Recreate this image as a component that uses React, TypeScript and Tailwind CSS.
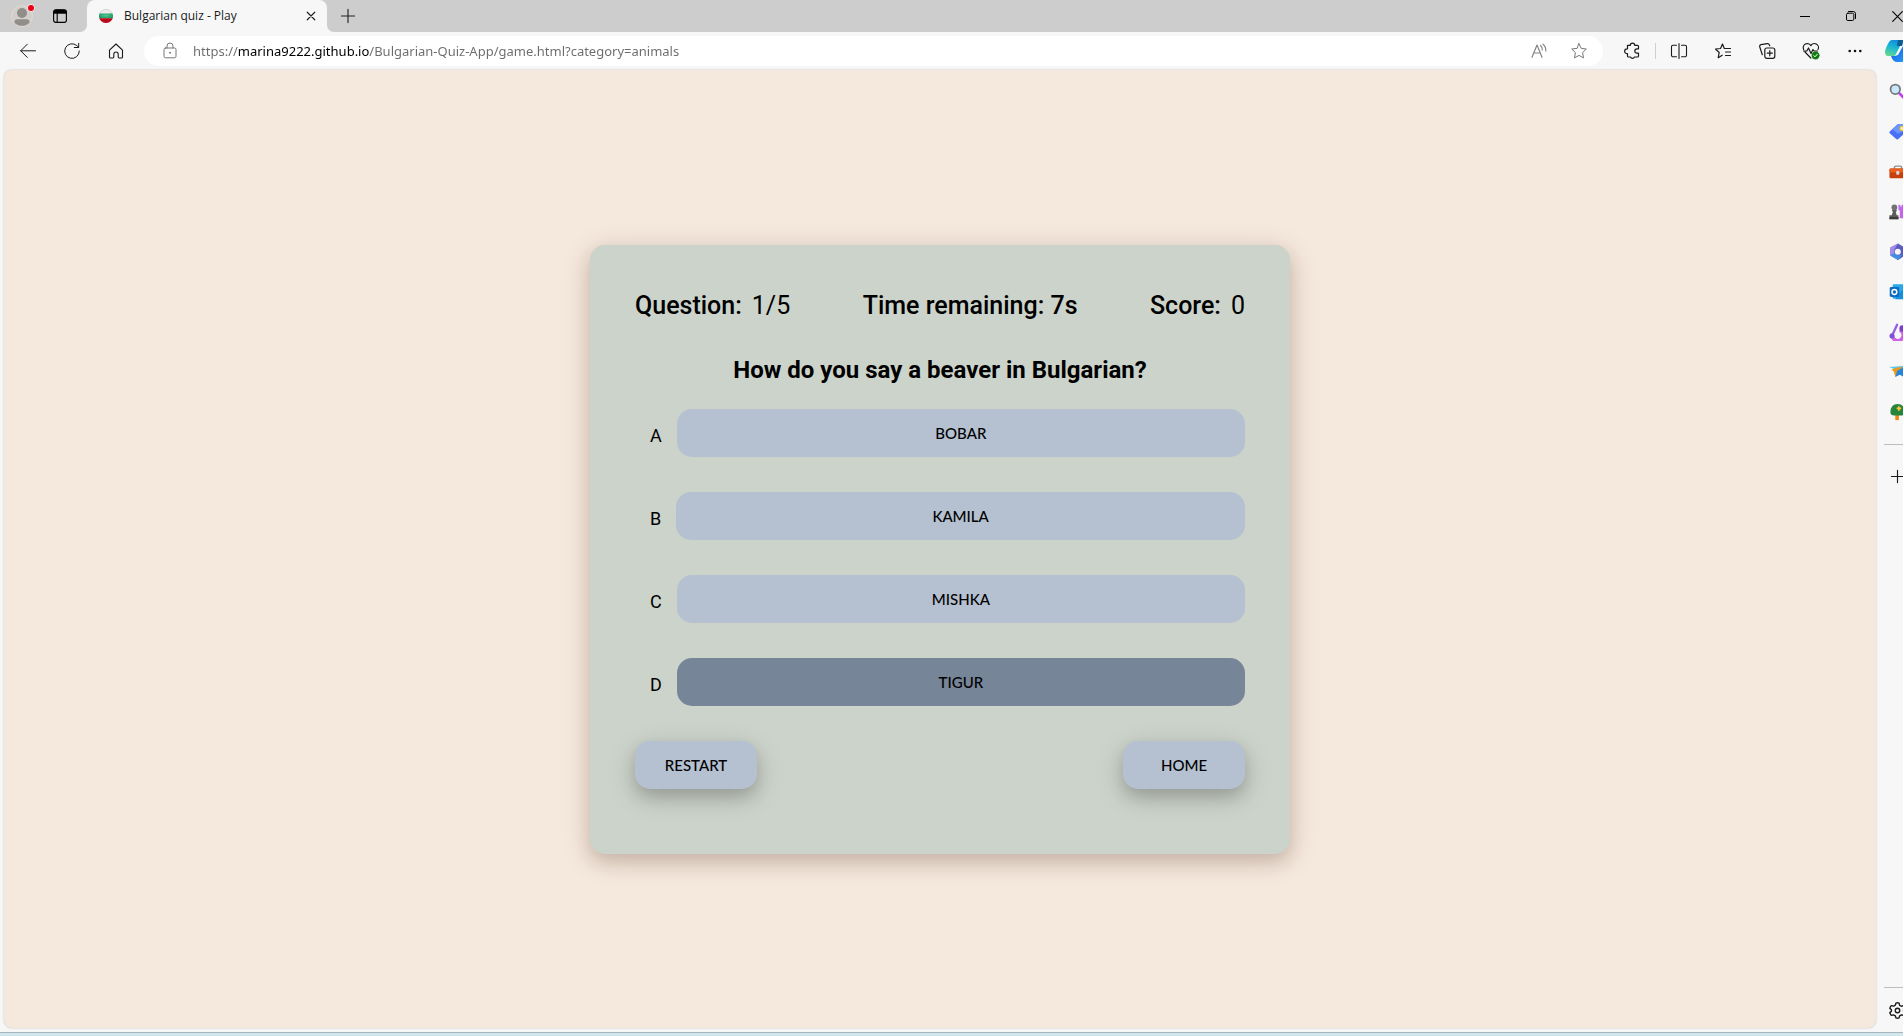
import { useState } from 'react';
import type { ReactNode } from 'react';

type IconProps = { children: ReactNode; size?: string; stroke?: string };

function Icon({ children, size = 'size-4', stroke = 'stroke-[#1b1b1b]' }: IconProps) {
  return (
    <svg
      viewBox="0 0 16 16"
      className={`${size} ${stroke} shrink-0 overflow-visible fill-none`}
      strokeLinecap="round"
      strokeLinejoin="round"
      aria-hidden="true"
    >
      {children}
    </svg>
  );
}

function ToolButton({ label, children }: { label: string; children: ReactNode }) {
  return (
    <button type="button" aria-label={label} className="flex h-8 w-11 shrink-0 items-center justify-center">
      {children}
    </button>
  );
}

function TabStrip() {
  return (
    <header className="flex h-8 shrink-0 items-stretch overflow-hidden bg-[#cdcdcd]">
      <button type="button" aria-label="Profile" className="flex w-11 shrink-0 items-center justify-center pt-1">
        <svg viewBox="0 0 24 24" className="size-6 overflow-visible" aria-hidden="true">
          <circle cx="12" cy="10" r="10.5" fill="#d2cec9" stroke="#dedbd7" />
          <circle cx="12" cy="7" r="5" fill="#918d89" />
          <path d="M4.3 16.5 Q4.3 13.3 7.5 13.3 H16.500 Q19.700 13.300 19.700 16.500 A10.500 10.500 0 0 1 4.300 16.500Z" fill="#918d89" />
          <circle cx="21" cy="2" r="3.600" fill="#e60012" stroke="#f4eeee" />
        </svg>
      </button>
      <button type="button" aria-label="Tab actions" className="flex w-8 shrink-0 items-center justify-center">
        <Icon size="size-[14px]" stroke="stroke-black">
          <rect x="0.700" y="1" width="14.600" height="14.300" rx="2.500" strokeWidth="1.300" />
          <path d="M1 4.500V3.300A2 2 0 0 1 3 1.200H13A2 2 0 0 1 15 3.300V4.500Z" fill="black" />
          <path d="M4.800 5V15" strokeWidth="1.300" />
        </Icon>
      </button>
      <div className="flex items-stretch">
        <svg viewBox="0 0 8 8" className="ml-1 size-[7px] self-end fill-[#f7f7f7]" aria-hidden="true">
          <path d="M8 0V8H0A8 8 0 0 0 8 0Z" />
        </svg>
        <div className="flex w-60 items-center rounded-t-lg bg-[#f7f7f7] pr-2 pl-3">
          <svg viewBox="0 0 14 14" className="size-[14px] shrink-0" aria-hidden="true">
            <defs>
              <clipPath id="flag-ball"><circle cx="7" cy="7" r="7" /></clipPath>
              <radialGradient id="flag-green" cx="0.5" cy="0.400" r="0.600">
                <stop offset="0" stopColor="#56c795" />
                <stop offset="1" stopColor="#169a62" />
              </radialGradient>
            </defs>
            <g clipPath="url(#flag-ball)">
              <rect width="14" height="5" fill="#ececec" />
              <rect y="4.500" width="14" height="5" fill="url(#flag-green)" />
              <rect y="9.300" width="14" height="5" fill="#c20718" />
            </g>
            <circle cx="7" cy="7" r="6.700" fill="none" stroke="#000" strokeOpacity="0.180" strokeWidth="0.600" />
          </svg>
          <span className="ml-[11px] flex-1 font-['Open_Sans',sans-serif] text-xs text-[#1b1b1b]">Bulgarian quiz - Play</span>
          <button type="button" aria-label="Close tab" className="flex size-4 items-center justify-center">
            <Icon size="size-2" stroke="stroke-[#222]">
              <path d="M0.500 0.500L15.500 15.500M15.500 0.500L0.500 15.500" strokeWidth="2.400" />
            </Icon>
          </button>
        </div>
        <svg viewBox="0 0 8 8" className="size-[7px] self-end fill-[#f7f7f7]" aria-hidden="true">
          <path d="M0 0V8H8A8 8 0 0 1 0 0Z" />
        </svg>
      </div>
      <button type="button" aria-label="New tab" className="flex w-7 items-center justify-center">
        <Icon size="size-[14px]" stroke="stroke-[#222]">
          <path d="M8 0.500V15.500M0.500 8H15.500" strokeWidth="1.300" />
        </Icon>
      </button>
      <div className="flex-1" />
      <button type="button" aria-label="Minimize" className="flex w-[46px] items-center justify-center">
        <span className="h-px w-[10px] bg-black" />
      </button>
      <button type="button" aria-label="Restore" className="flex w-[46px] items-center justify-center">
        <Icon size="size-[10px]" stroke="stroke-black">
          <rect x="0.800" y="3.500" width="11.700" height="11.700" rx="2.200" strokeWidth="1.600" />
          <path d="M4 0.800H11.500A3.700 3.700 0 0 1 15.200 4.500V12" strokeWidth="1.600" />
        </Icon>
      </button>
      <button type="button" aria-label="Close window" className="flex w-[29px] items-center justify-end">
        <Icon size="size-[11px]" stroke="stroke-black">
          <path d="M1 1L15 15M15 1L1 15" strokeWidth="1.600" />
        </Icon>
      </button>
    </header>
  );
}

function Toolbar() {
  const [url, setUrl] = useState('https://marina9222.github.io/Bulgarian-Quiz-App/game.html?category=animals');
  return (
    <div className="flex h-[37px] shrink-0 items-center overflow-hidden pl-[6px]">
      <ToolButton label="Back">
        <Icon><path d="M15.500 7.800H0.700M7.300 1.200L0.700 7.800L7.300 14.400" /></Icon>
      </ToolButton>
      <ToolButton label="Refresh">
        <Icon>
          <path d="M15.300 8A7.300 7.300 0 1 1 12.700 2.500L14.700 4.300M14.700 0.300V4.500H10.300" />
        </Icon>
      </ToolButton>
      <ToolButton label="Home">
        <Icon>
          <path d="M1.500 7.100L8 1L14.500 7.100V14A1 1 0 0 1 13.500 15H11A1 1 0 0 1 10.200 14.200V11.200A2.200 2.200 0 0 0 5.800 11.200V14.200A1 1 0 0 1 5 15H2.500A1 1 0 0 1 1.500 14Z" strokeWidth="1.100" />
        </Icon>
      </ToolButton>
      <div className="ml-[6px] flex h-[30px] min-w-0 flex-1 items-center rounded-full bg-white pr-1 pl-[18px]">
        <Icon stroke="stroke-[#777]">
          <rect x="2" y="5" width="12" height="9.800" rx="1.500" />
          <path d="M5 5V3A3 3 0 0 1 11 3V5" />
          <circle cx="8" cy="9.800" r="0.500" fill="#777" />
        </Icon>
        <input
          type="text"
          aria-label="Address"
          value={url}
          onChange={(e) => setUrl(e.target.value)}
          className="ml-[15px] h-6 min-w-0 flex-1 bg-[linear-gradient(to_right,#6b6b6b_45px,#000_45px,#000_176px,#6b6b6b_176px)] bg-clip-text text-[13px] text-transparent caret-black outline-none"
        />
        <button type="button" aria-label="Read aloud" className="flex h-6 w-10 items-center justify-center">
          <Icon stroke="stroke-[#858585]">
            <path d="M1 14.300L6 2L11 14.300M2.800 10H9.200" strokeWidth="1.200" />
            <path d="M9.500 2.500A5 5 0 0 1 11.300 7M12 1.200A8 8 0 0 1 14.800 8" strokeWidth="1.200" />
          </Icon>
        </button>
        <button type="button" aria-label="Add to favorites" className="flex h-6 w-10 items-center justify-center">
          <Icon stroke="stroke-[#777]">
            <path d="M8 0.700L10.200 5.400L15.300 6L11.600 9.600L12.500 14.900L8 12.400L3.500 14.900L4.400 9.600L0.700 6L5.800 5.400Z" />
          </Icon>
        </button>
      </div>
      <div className="ml-[7px] flex w-[293px] shrink-0 items-center">
        <ToolButton label="Extensions">
          <Icon>
            <path d="M3.500 2.300H6.300A2.200 2.200 0 0 1 10.700 2.300H13.500A1 1 0 0 1 14.500 3.300V5.800H13A2.100 2.100 0 0 0 13 10.200H14.500V13A1 1 0 0 1 13.500 14H10.500A2.200 2.200 0 0 1 6.500 14H4.500A1 1 0 0 1 3.500 13V10.500H3A2.100 2.100 0 0 1 3 5.800H3.500Z" strokeWidth="1.200" />
          </Icon>
        </ToolButton>
        <span className="mx-px h-4 w-px shrink-0 bg-[#cfcfcf]" />
        <ToolButton label="Split screen">
          <Icon>
            <path d="M8 0.500V15.500M5.500 2.200H2A1.500 1.500 0 0 0 0.500 3.700V12.300A1.500 1.500 0 0 0 2 13.800H5.500M10.500 2.200H14A1.500 1.500 0 0 1 15.500 3.700V12.300A1.500 1.500 0 0 1 14 13.800H10.500" strokeWidth="1.100" />
          </Icon>
        </ToolButton>
        <ToolButton label="Favorites">
          <Icon>
            <path d="M10.500 5.500H9.300L7.500 1L5.500 5.500L0.500 6L4.200 9.500L3.200 14.700L7.200 12.200M10.500 5.500H15.500M10.500 9H15.500M10.500 12.500H15.500" strokeWidth="1.200" />
          </Icon>
        </ToolButton>
        <ToolButton label="Collections">
          <Icon>
            <rect x="5.800" y="5" width="10" height="10.300" rx="2" strokeWidth="1.200" />
            <path d="M10.800 7.500V12.800M8.200 10.100H13.400M3.300 11.700L0.700 3.700A1.800 1.800 0 0 1 1.900 1.600L8.300 0.600A1.800 1.800 0 0 1 10.300 1.800L10.800 2.800" strokeWidth="1.200" />
          </Icon>
        </ToolButton>
        <ToolButton label="Browser essentials">
          <Icon>
            <path d="M0.700 6.500A4 4 0 0 1 7.800 2.700A4 4 0 0 1 15 6.500M2 9L7.800 15M0.500 8H3.800L5.500 5L8 10.500L10 6.500L11 8H14.500" strokeWidth="1.200" />
            <circle cx="12.500" cy="12.500" r="3.700" fill="#107c10" stroke="#107c10" strokeWidth="0.500" />
            <path d="M10.800 12.600L12 13.800L14.200 11.300" stroke="#fff" />
          </Icon>
        </ToolButton>
        <ToolButton label="Settings and more">
          <Icon stroke="stroke-none">
            <g fill="#111">
              <circle cx="2.700" cy="8" r="1.300" />
              <circle cx="8" cy="8" r="1.300" />
              <circle cx="13.300" cy="8" r="1.300" />
            </g>
          </Icon>
        </ToolButton>
        <button type="button" aria-label="Copilot" className="ml-2 shrink-0">
          <svg viewBox="0 0 24 24" className="size-6" aria-hidden="true">
            <defs>
              <linearGradient id="copilot-left" x1="0.600" y1="0" x2="0.200" y2="1">
                <stop offset="0" stopColor="#1489dc" />
                <stop offset="0.450" stopColor="#19b7d4" />
                <stop offset="1" stopColor="#65d98d" />
              </linearGradient>
              <linearGradient id="copilot-right" x1="0" y1="0" x2="1" y2="1">
                <stop offset="0" stopColor="#2450d8" />
                <stop offset="1" stopColor="#1fa8ff" />
              </linearGradient>
            </defs>
            <path d="M7 1H17Q19 1 18 4L14 14Q12 17 9 17H3Q0 17 0 13Q0 10 4 3Q5 1 7 1Z" fill="url(#copilot-left)" />
            <path d="M13 1H18L17 7H12Z" fill="#0d5d91" />
            <path d="M6 17H10Q12 17 13 14L16 7H24V17Q20 23 17 23H12Q8 23 6 17Z" fill="url(#copilot-right)" />
            <path d="M15 7H18L13 16L9 17Q11 16 12 13Z" fill="#f4fbff" />
          </svg>
        </button>
      </div>
    </div>
  );
}

const APPS: { name: string; art: ReactNode }[] = [
  {
    name: 'Search',
    art: (
      <>
        <path d="M11 11L18 18" stroke="#c53df0" strokeWidth="3" strokeLinecap="round" />
        <circle cx="7" cy="7" r="5.300" fill="#c9e8fb" stroke="#77797c" strokeWidth="2" />
      </>
    ),
  },
  {
    name: 'Shopping',
    art: (
      <>
        <path d="M10 1H19V10L10 18Q9 18.600 8 17.800L0.800 11.500Q0 10.500 0.800 9.500Z" fill="#4a70f5" />
        <path d="M10 1H18V8L10 12L3.500 7Z" fill="#6c96ff" />
        <circle cx="14.500" cy="6" r="2.300" fill="#fff3b8" stroke="#eec12c" strokeWidth="1.400" />
      </>
    ),
  },
  {
    name: 'Tools',
    art: (
      <>
        <path d="M6 7V5Q6 3.500 7.500 3.500H12.500Q14 3.500 14 5V7" fill="none" stroke="#8b8f94" strokeWidth="1.600" />
        <rect x="0.500" y="6" width="19" height="11" rx="1.500" fill="#c7400f" />
        <rect x="0.500" y="6" width="19" height="4.500" rx="1.500" fill="#e8601f" />
        <rect x="8" y="9" width="3.500" height="4" rx="1" fill="#d6d9db" />
      </>
    ),
  },
  {
    name: 'Games',
    art: (
      <>
        <path d="M10.500 2H12.500V4H14V2H17V17H12V8H10.500Z" fill="#c465ee" />
        <circle cx="6" cy="5" r="3.200" fill="#727272" />
        <path d="M3.500 7.800H8.500V9.500H7.500L8.500 13.500H10.500V18H0.500V13.500H3L4.500 9.500H3.500Z" fill="#5c5c5c" />
        <path d="M0.500 15.500H10.500V18H0.500Z" fill="#3c3c3c" />
      </>
    ),
  },
  {
    name: 'Microsoft 365',
    art: (
      <>
        <path d="M10 0.500L17.500 5V14L10 19L1.500 14V5Z" fill="#5a5cc4" />
        <path d="M10 0.500L6 7V12L1.500 14V5Z" fill="#a58be8" />
        <path d="M1.500 14L6 11.500L10 14L15 13L10 19Z" fill="#3f8fdf" />
        <circle cx="9.800" cy="9.800" r="3.300" fill="#f7f7f7" />
      </>
    ),
  },
  {
    name: 'Outlook',
    art: (
      <>
        <rect x="4" y="1.500" width="15" height="16" rx="1.500" fill="#28a8ea" />
        <path d="M12 10L19 6V18H7Z" fill="#1490df" />
        <rect x="0.800" y="4.500" width="10.400" height="11" rx="1.500" fill="#0f6cbd" />
        <circle cx="6" cy="10" r="2.700" fill="none" stroke="#fff" strokeWidth="1.600" />
      </>
    ),
  },
  {
    name: 'Designer',
    art: (
      <>
        <path d="M12 8A6 6 0 1 1 4 12" fill="none" stroke="#cf63e8" strokeWidth="4" />
        <path d="M3.500 14L9 2" stroke="#9261e2" strokeWidth="2.600" strokeLinecap="round" />
        <circle cx="3.300" cy="14.500" r="2.800" fill="#7d51d6" />
        <circle cx="15" cy="6" r="3.500" fill="#7a3fc9" />
      </>
    ),
  },
  {
    name: 'Drop',
    art: (
      <>
        <path d="M0 4.500L19 3L12 9Z" fill="#5fc2f4" />
        <path d="M3 7L15 4L7 15.500L5.500 10Z" fill="#e99a18" />
        <path d="M9 9L19 3L17 16L12 13L7 15.500Z" fill="#2684dc" />
      </>
    ),
  },
  {
    name: 'E-tree',
    art: (
      <>
        <rect x="7" y="12" width="4" height="7" fill="#e98b16" />
        <path d="M1.500 10Q2 1 9.500 1Q17 1 17.500 10Q17.500 14 13 14H6Q1.500 14 1.500 10Z" fill="#26853d" />
        <path d="M11 3.500V8.500M8.500 6H13.500" stroke="#ffc43d" strokeWidth="2" />
      </>
    ),
  },
];

function Sidebar() {
  return (
    <nav aria-label="Sidebar" className="flex w-[26px] shrink-0 flex-col overflow-hidden pt-[3px]">
      {APPS.map((app) => (
        <button key={app.name} type="button" aria-label={app.name} className="flex h-10 shrink-0 items-center pl-3">
          <svg viewBox="0 0 20 20" className="size-[18px] shrink-0" aria-hidden="true">
            {app.art}
          </svg>
        </button>
      ))}
      <hr className="mt-3 ml-[7px] border-[#bdbdbd]" />
      <button type="button" aria-label="Customize" className="mt-[11px] flex h-10 shrink-0 items-center pl-[14px]">
        <Icon size="size-[13px]">
          <path d="M8 0.500V15.500M0.500 8H15.500" strokeWidth="1.400" />
        </Icon>
      </button>
      <div className="flex-1" />
      <hr className="ml-[7px] border-[#bdbdbd]" />
      <button type="button" aria-label="Settings" className="flex h-[44px] shrink-0 items-center pl-3">
        <Icon size="size-[17px]">
          <path d="M6.500 1Q8 0.300 9.500 1L10 3.100L11.700 4L13.700 3.400Q15 4.600 15.200 6.100L13.700 7.500V8.700L15.200 10Q14.900 11.600 13.700 12.600L11.700 12.100L10 13L9.500 15Q8 15.700 6.500 15L6 13L4.300 12.100L2.300 12.600Q1.100 11.500 0.800 10L2.300 8.600V7.400L0.800 6Q1.100 4.500 2.300 3.400L4.300 3.900L6 3Z" strokeWidth="1.300" />
          <circle cx="8" cy="8" r="2.100" strokeWidth="1.300" />
        </Icon>
      </button>
    </nav>
  );
}

const OPTIONS = [
  { letter: 'A', word: 'BOBAR' },
  { letter: 'B', word: 'KAMILA' },
  { letter: 'C', word: 'MISHKA' },
  { letter: 'D', word: 'TIGUR' },
];

function Quiz() {
  const [picked, setPicked] = useState('D');
  return (
    <section className="w-[700px] max-w-full rounded-[15px] bg-[#ccd3ca] px-[45px] pt-[45px] pb-[65px] font-['Roboto',sans-serif] text-black shadow-[0_8px_16px_rgba(90,50,30,0.16),0_6px_30px_rgba(60,30,10,0.16)]">
      <div className="flex items-center justify-between text-[25px] leading-8">
        <p>
          <span className="mr-[10px] font-medium">Question:</span>
          <span>1/5</span>
        </p>
        <p className="font-medium">Time remaining: 7s</p>
        <p>
          <span className="mr-[10px] font-medium">Score:</span>
          <span>0</span>
        </p>
      </div>
      <h1 className="mt-8 text-center text-2xl leading-8 font-bold">How do you say a beaver in Bulgarian?</h1>
      <ol className="mt-[23px] flex flex-col gap-[35px]">
        {OPTIONS.map((option) => (
          <li key={option.letter} className="flex items-center">
            <label htmlFor={`option-${option.letter}`} className="px-[15px] pt-[5px] text-lg">
              {option.letter}
            </label>
            <button
              id={`option-${option.letter}`}
              type="button"
              aria-pressed={picked === option.letter}
              onClick={() => setPicked(option.letter)}
              className={`h-12 flex-1 rounded-[15px] font-['Lato',sans-serif] text-[15px] font-medium ${
                picked === option.letter ? 'bg-[#778599]' : 'bg-[#b5c0d1]'
              }`}
            >
              {option.word}
            </button>
          </li>
        ))}
      </ol>
      <div className="mt-[35px] flex justify-between">
        {['RESTART', 'HOME'].map((name) => (
          <button
            key={name}
            type="button"
            className="h-12 w-[122px] rounded-[15px] bg-[#b5c0d1] font-['Lato',sans-serif] text-[15px] font-medium shadow-[0_8px_16px_rgba(0,0,0,0.16),0_8px_30px_rgba(0,0,0,0.14)]"
          >
            {name}
          </button>
        ))}
      </div>
    </section>
  );
}

export default function App() {
  return (
    <div className="flex h-screen flex-col overflow-hidden bg-[#f7f7f7] font-['Noto_Sans',sans-serif]">
      <TabStrip />
      <Toolbar />
      <div className="flex min-h-0 flex-1">
        <main className="mt-px mr-px mb-1 ml-1 flex min-w-0 flex-1 items-center justify-center rounded-lg bg-[#f5e8dd] pt-px shadow-[0_0_2px_rgba(0,0,0,0.25)]">
          <Quiz />
        </main>
        <Sidebar />
      </div>
      <div className="h-1 shrink-0 border-t border-[#a9b5bb] bg-[#cfe7ec]" />
    </div>
  );
}
